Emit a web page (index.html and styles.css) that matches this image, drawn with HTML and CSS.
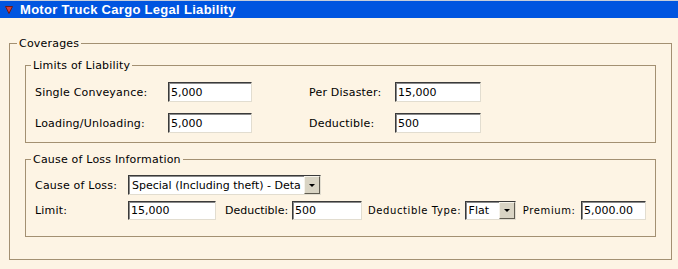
FILE: index.html
```html
<!DOCTYPE html>
<html lang="en">
  <head>
    <meta charset="UTF-8" />
    <title>Motor Truck Cargo Legal Liability</title>
    <link rel="stylesheet" href="styles.css">
  </head>
  <body>
    <div class="panel">
      <div class="panel-header">
        <svg class="toggle" width="8" height="8" viewBox="0 0 8 8">
          <path d="M0.5 0.5 L7.5 0.5 L4 7.5 Z" fill="#d23c3c" stroke="#6b1a1a" stroke-width="1" stroke-linejoin="round" />
        </svg>
        <span>Motor Truck Cargo Legal Liability</span>
      </div>

      <fieldset class="group outer">
        <legend class="outer-legend">Coverages</legend>

        <fieldset class="group limits">
          <legend>Limits of Liability</legend>
          <div class="limits-grid">
            <label>Single Conveyance:</label>
            <input class="field w84" type="text" value="5,000">
            <label class="col2">Per Disaster:</label>
            <input class="field w86" type="text" value="15,000">

            <label>Loading/Unloading:</label>
            <input class="field w84" type="text" value="5,000">
            <label class="col2">Deductible:</label>
            <input class="field w86" type="text" value="500">
          </div>
        </fieldset>

        <fieldset class="group cause">
          <legend>Cause of Loss Information</legend>
          <div class="row">
            <label class="lbl-first">Cause of Loss:</label>
            <div class="select w193">
              <span class="select-text">Special (Including theft) - Deta</span>
              <span class="select-btn"><i></i></span>
            </div>
          </div>
          <div class="row row-small">
            <label class="lbl-first">Limit:</label>
            <input class="field w88" type="text" value="15,000">
            <label class="lbl-ded">Deductible:</label>
            <input class="field w70" type="text" value="500">
            <label class="lbl-type">Deductible Type:</label>
            <div class="select w52">
              <span class="select-text">Flat</span>
              <span class="select-btn"><i></i></span>
            </div>
            <label class="lbl-prem">Premium:</label>
            <input class="field w65" type="text" value="5,000.00">
          </div>
        </fieldset>
      </fieldset>
    </div>
  </body>
</html>
```

FILE: styles.css
```css
body {
  margin: 0;
  background: #fdf4e4;
  font-family: "DejaVu Sans", Verdana, sans-serif;
  font-size: 11px;
  color: #000;
}

label,
legend {
  letter-spacing: 0.2px;
}

/* header bar */
.panel-header {
  display: flex;
  align-items: center;
  gap: 7px;
  height: 17px;
  padding-left: 5px;
  border-top: 1px solid #c6cedb;
  background: #0055e0;
  color: #fff;
  font-family: "Liberation Sans", Arial, sans-serif;
  font-weight: bold;
  font-size: 13px;
  letter-spacing: 0.3px;
}

.toggle {
  flex: none;
}

/* group boxes */
.group {
  margin: 0;
  min-width: 0;
  border: 1px solid #a39072;
}

.group legend {
  padding: 0 2px;
  margin-left: -4px;
  line-height: 13px;
}

.outer {
  margin: 19px 6px 0 9px;
  padding: 9px 15px 22px 15px;
}

.outer-legend {
  margin-left: -8px !important;
}

.limits {
  padding: 10px 9px 9px 9px;
}

.cause {
  margin-top: 10px;
  padding: 9px 9px 16px 9px;
}

.limits-grid {
  display: grid;
  grid-template-columns: 133px 84px 143px 86px;
  row-gap: 11px;
  align-items: center;
}

.limits-grid .col2 {
  padding-left: 57px;
}

.row {
  display: flex;
  align-items: center;
}

.row-small {
  margin-top: 6px;
}

.lbl-first {
  width: 93px;
  flex: none;
}

.lbl-ded {
  margin-left: 9px;
  width: 68px;
  letter-spacing: 0;
}

.lbl-type {
  margin-left: 6px;
  width: 98px;
  font-size: 10px;
  letter-spacing: 0.6px;
}

.lbl-prem {
  margin-left: 7px;
  width: 59px;
  font-size: 10px;
  letter-spacing: 0.6px;
}

/* inputs */
.field {
  box-sizing: border-box;
  height: 20px;
  margin: 0;
  padding: 0 2px;
  font-family: inherit;
  font-size: 11px;
  color: #000;
  background: #fff;
  border: 1px solid;
  border-color: #3a3a3a #e2ddd0 #e2ddd0 #3a3a3a;
  box-shadow: inset 1px 1px 0 #8a8a8a;
  outline: none;
}

.row-small .field {
  height: 19px;
}

.w84 { width: 84px; }
.w86 { width: 86px; }
.w88 { width: 88px; }
.w70 { width: 70px; }
.w65 { width: 65px; }

/* fake combo boxes */
.select {
  box-sizing: border-box;
  display: flex;
  align-items: center;
  height: 20px;
  background: #fff;
  border: 1px solid;
  border-color: #3a3a3a #e2ddd0 #e2ddd0 #3a3a3a;
  box-shadow: inset 1px 1px 0 #8a8a8a;
}

.row-small .select {
  height: 19px;
}

.w193 { width: 193px; }
.w52 { width: 52px; }

.select-text {
  flex: 1;
  padding-left: 3px;
  white-space: nowrap;
  overflow: hidden;
}

.select-btn {
  box-sizing: border-box;
  display: flex;
  align-items: center;
  justify-content: center;
  width: 16px;
  height: 100%;
  background: #d9d4c4;
  border: 1px solid;
  border-color: #f6f3ea #5f5b50 #5f5b50 #f6f3ea;
}

.select-btn i {
  width: 0;
  height: 0;
  border-left: 3px solid transparent;
  border-right: 3px solid transparent;
  border-top: 3px solid #000;
}
```
